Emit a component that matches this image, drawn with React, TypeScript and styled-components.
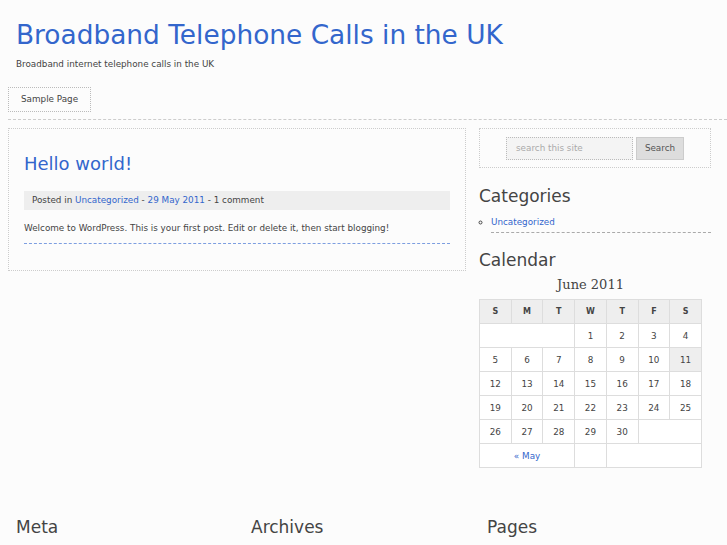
import React from "react";
import styled, { createGlobalStyle } from "styled-components";

const Global = createGlobalStyle`
  html, body { margin: 0; padding: 0; background: #fcfcfc; }
  body { font-family: "DejaVu Sans", Verdana, sans-serif; color: #444; font-size: 8.8px; }
  a { color: #3366cc; text-decoration: none; }
`;

const Page = styled.div`
  width: 727px;
  height: 545px;
  overflow: hidden;
`;

const Header = styled.header`
  padding: 20px 16px 0 16px;
`;

const SiteTitle = styled.h1`
  margin: 0;
  font-size: 26.4px;
  font-weight: normal;
  line-height: 30px;
  color: #3366cc;
  white-space: nowrap;
`;

const Tagline = styled.p`
  margin: 8px 0 0 0;
  font-size: 8.8px;
  line-height: 12px;
  color: #444;
`;

const Nav = styled.ul`
  list-style: none;
  margin: 17px 0 0 8px;
  padding: 0 0 7px 0;
  border-bottom: 1px dashed #ccc;
  display: flex;
`;

const NavItem = styled.li`
  border: 1px dotted #bbb;
  height: 23px;
  line-height: 23px;
  padding: 0 12px;
  font-size: 8.8px;
  color: #444;
`;

const Layout = styled.div`
  display: flex;
  align-items: flex-start;
  gap: 13px;
  margin: 8px 16px 0 8px;
`;

const Main = styled.main`
  width: 458px;
  border: 1px dotted #ccc;
  padding: 15px 15px 26px 15px;
  box-sizing: border-box;
`;

const PostTitle = styled.h2`
  margin: 9px 0 0 0;
  font-size: 18px;
  font-weight: normal;
  line-height: 22px;
  color: #3366cc;
`;

const PostMeta = styled.div`
  margin-top: 16px;
  background: #eee;
  height: 19px;
  line-height: 19px;
  padding: 0 8px;
  font-size: 8.8px;
  color: #444;
`;

const PostBody = styled.p`
  margin: 11px 0 0 0;
  font-size: 8.8px;
  line-height: 14px;
  padding-bottom: 8px;
  color: #444;
`;

const BlueRule = styled.hr`
  margin: 0;
  border: none;
  border-top: 1px dashed #7d9ee0;
  height: 0;
`;

const Sidebar = styled.aside`
  width: 232px;
  display: flex;
  flex-direction: column;
`;

const SearchBox = styled.form`
  border: 1px dotted #ccc;
  height: 40px;
  margin: 0;
  box-sizing: border-box;
  display: flex;
  align-items: center;
  justify-content: center;
  gap: 3px;
`;

const SearchInput = styled.div`
  width: 127px;
  height: 23px;
  box-sizing: border-box;
  border: 1px dotted #bbb;
  background: #f4f4f4;
  color: #aaa;
  font-size: 8.8px;
  line-height: 21px;
  padding-left: 9px;
`;

const SearchButton = styled.div`
  width: 48px;
  height: 23px;
  box-sizing: border-box;
  border: 1px solid #ccc;
  background: #ddd;
  color: #555;
  font-size: 8.8px;
  line-height: 21px;
  text-align: center;
`;

const WidgetTitle = styled.h3<{ $top: number }>`
  margin: ${(p) => p.$top}px 0 0 0;
  font-size: 17px;
  font-weight: normal;
  line-height: 20px;
  color: #444;
`;

const CatList = styled.ul`
  margin: 10px 0 0 0;
  padding: 0 0 0 12px;
  list-style: circle;
`;

const CatItem = styled.li`
  font-size: 8.8px;
  line-height: 13px;
  padding-bottom: 3px;
  border-bottom: 1px dashed #aaa;
`;

const CalTable = styled.table`
  margin-top: 7px;
  width: 223px;
  border-collapse: collapse;
  font-size: 8.8px;
  color: #444;
`;

const Caption = styled.caption`
  font-family: "DejaVu Serif", Georgia, serif;
  font-size: 13px;
  line-height: 15px;
  padding-bottom: 7px;
  color: #444;
`;

const Th = styled.th`
  background: #eee;
  border: 1px solid #ddd;
  height: 23px;
  padding: 0;
  font-weight: bold;
  font-size: 8px;
  width: 32px;
`;

const Td = styled.td<{ $today?: boolean }>`
  border: 1px solid #ddd;
  height: 23px;
  padding: 0;
  text-align: center;
  background: ${(p) => (p.$today ? "#eee" : "#fff")};
`;

const Footer = styled.footer`
  display: grid;
  grid-template-columns: 235px 236px 1fr;
  padding: 0 0 0 16px;
  margin-top: 49px;
`;

const FooterTitle = styled.h3`
  margin: 0;
  font-size: 17px;
  font-weight: normal;
  line-height: 20px;
  color: #444;
`;

const weeks: (number | null)[][] = [
  [null, null, null, 1, 2, 3, 4],
  [5, 6, 7, 8, 9, 10, 11],
  [12, 13, 14, 15, 16, 17, 18],
  [19, 20, 21, 22, 23, 24, 25],
  [26, 27, 28, 29, 30, null, null],
];

function Week({ days }: { days: (number | null)[] }) {
  const cells: React.ReactNode[] = [];
  let i = 0;
  while (i < days.length) {
    if (days[i] === null) {
      let span = 0;
      while (i < days.length && days[i] === null) {
        span++;
        i++;
      }
      cells.push(<Td key={"e" + i} colSpan={span} />);
    } else {
      const d = days[i] as number;
      cells.push(
        <Td key={d} $today={d === 11}>
          {d}
        </Td>
      );
      i++;
    }
  }
  return <tr>{cells}</tr>;
}

export default function App() {
  return (
    <Page>
      <Global />
      <Header>
        <SiteTitle>Broadband Telephone Calls in the UK</SiteTitle>
        <Tagline>Broadband internet telephone calls in the UK</Tagline>
      </Header>
      <Nav>
        <NavItem>Sample Page</NavItem>
      </Nav>
      <Layout>
        <Main>
          <PostTitle>
            <a href="#">Hello world!</a>
          </PostTitle>
          <PostMeta>
            Posted in <a href="#">Uncategorized</a> - <a href="#">29 May 2011</a> - 1 comment
          </PostMeta>
          <PostBody>
            Welcome to WordPress. This is your first post. Edit or delete it, then start blogging!
          </PostBody>
          <BlueRule />
        </Main>
        <Sidebar>
          <SearchBox>
            <SearchInput>search this site</SearchInput>
            <SearchButton>Search</SearchButton>
          </SearchBox>
          <WidgetTitle $top={18}>Categories</WidgetTitle>
          <CatList>
            <CatItem>
              <a href="#">Uncategorized</a>
            </CatItem>
          </CatList>
          <WidgetTitle $top={17}>Calendar</WidgetTitle>
          <CalTable>
            <Caption>June 2011</Caption>
            <thead>
              <tr>
                {["S", "M", "T", "W", "T", "F", "S"].map((d, k) => (
                  <Th key={k}>{d}</Th>
                ))}
              </tr>
            </thead>
            <tbody>
              {weeks.map((w, k) => (
                <Week key={k} days={w} />
              ))}
              <tr>
                <Td colSpan={3}>
                  <a href="#">« May</a>
                </Td>
                <Td />
                <Td colSpan={3} />
              </tr>
            </tbody>
          </CalTable>
        </Sidebar>
      </Layout>
      <Footer>
        <FooterTitle>Meta</FooterTitle>
        <FooterTitle>Archives</FooterTitle>
        <FooterTitle>Pages</FooterTitle>
      </Footer>
    </Page>
  );
}
